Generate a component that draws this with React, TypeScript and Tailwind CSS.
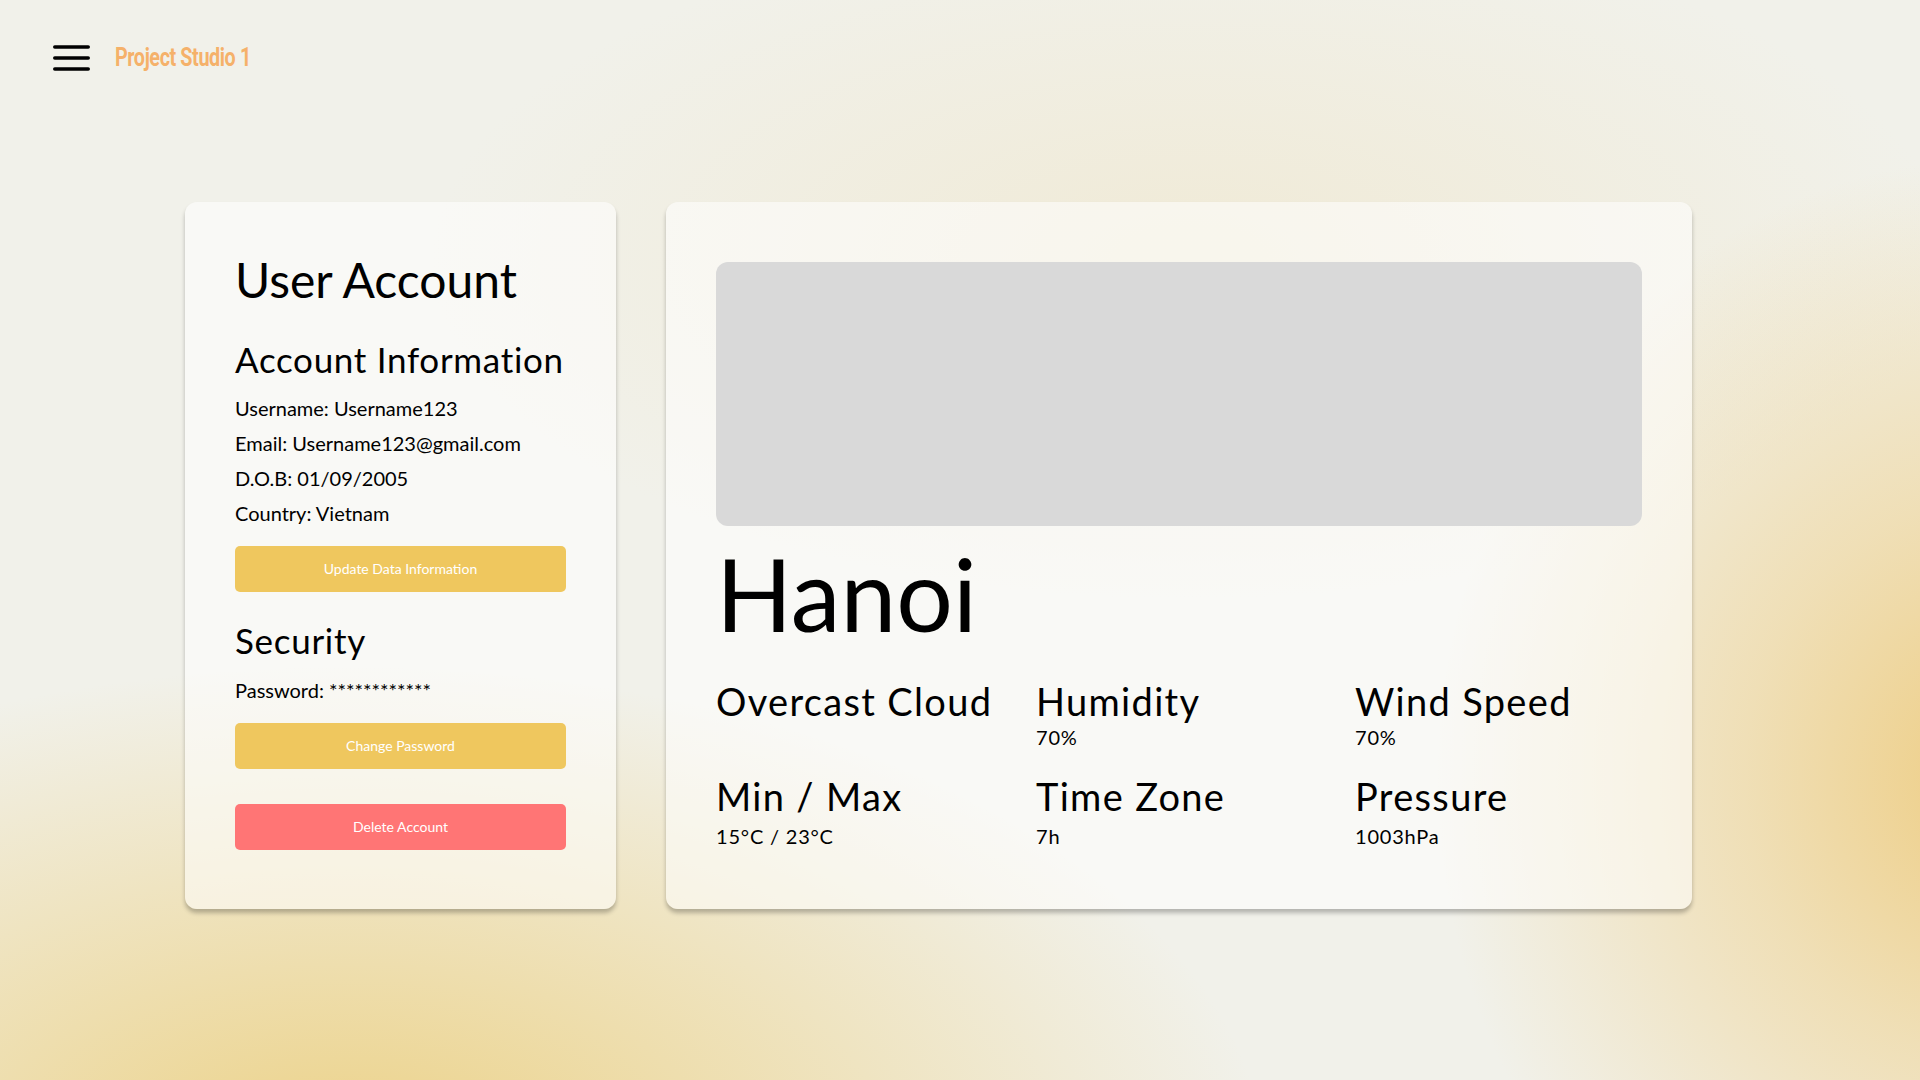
import React from 'react';

const stats = [
  { label: 'Overcast Cloud', value: '' },
  { label: 'Humidity', value: '70%' },
  { label: 'Wind Speed', value: '70%' },
  { label: 'Min / Max', value: '15°C / 23°C' },
  { label: 'Time Zone', value: '7h' },
  { label: 'Pressure', value: '1003hPa' },
];

const Menu: React.FC = () => (
  <svg width="38" height="30" viewBox="0 0 38 30" fill="none" stroke="#000" strokeWidth="3.5" strokeLinecap="round">
    <line x1="2.75" y1="4" x2="36.25" y2="4" />
    <line x1="2.75" y1="15" x2="36.25" y2="15" />
    <line x1="2.75" y1="26" x2="36.25" y2="26" />
  </svg>
);

const App: React.FC = () => {
  return (
    <div className="min-h-screen w-full bg-[#f1f1ea] bg-[image:radial-gradient(ellipse_920px_500px_at_18%_108%,#ecd185_0%,rgba(236,209,133,0.55)_45%,rgba(236,209,133,0)_100%),radial-gradient(ellipse_560px_620px_at_104%_72%,#eecd83_0%,rgba(238,205,131,0.5)_45%,rgba(238,205,131,0)_100%),radial-gradient(ellipse_760px_340px_at_62%_24%,#f0ead6_0%,rgba(240,234,214,0)_100%)] font-['Lato',sans-serif] text-black">
      <header className="flex items-center gap-[25px] pl-[52px] pt-[42px]">
        <Menu />
        <span className="mt-[1px] inline-block origin-left scale-x-[0.79] font-['Roboto',sans-serif] text-[25px] leading-[30px] font-bold tracking-[-0.5px] whitespace-nowrap text-[#f5b16a]">
          Project Studio 1
        </span>
      </header>

      <main className="ml-[185px] mt-[129px] flex gap-[50px]">
        <section className="flex w-[431px] flex-col rounded-xl bg-white/55 px-[50px] pt-[49px] pb-[59px] shadow-[0_4px_4px_rgba(0,0,0,0.25)]">
          <h1 className="text-[48px] leading-[1.2] whitespace-nowrap">User Account</h1>
          <h2 className="mt-[29px] text-[35px] leading-[1.2] tracking-[0.02em] whitespace-nowrap">Account Information</h2>
          <div className="mt-[11px] text-[20px] leading-[35px]">
            <p>Username: Username123</p>
            <p>Email: Username123@gmail.com</p>
            <p>D.O.B: 01/09/2005</p>
            <p>Country: Vietnam</p>
          </div>
          <button className="mt-[15px] h-[46px] w-full rounded-[5px] bg-[#efc75e] text-[14px] text-white">
            Update Data Information
          </button>
          <h2 className="mt-[27px] text-[35px] leading-[1.2] tracking-[0.02em]">Security</h2>
          <p className="mt-[12px] text-[20px] leading-[35px]">Password: ************</p>
          <button className="mt-[15px] h-[46px] w-full rounded-[5px] bg-[#efc75e] text-[14px] text-white">
            Change Password
          </button>
          <button className="mt-[35px] h-[46px] w-full rounded-[5px] bg-[#ff7575] text-[14px] text-white">
            Delete Account
          </button>
        </section>

        <section className="flex w-[1026px] flex-col rounded-xl bg-white/55 px-[50px] pt-[60px] shadow-[0_4px_4px_rgba(0,0,0,0.25)]">
          <div className="h-[264px] w-full rounded-xl bg-[#d9d9d9]" />
          <h1 className="mt-[7px] text-[100px] leading-[1.2]">Hanoi</h1>
          <div className="mt-[26px] grid grid-cols-[320px_319px_1fr]">
            {stats.slice(0, 3).map((s) => (
              <div key={s.label}>
                <h3 className="text-[38px] leading-[1.2] tracking-[0.035em] whitespace-nowrap">{s.label}</h3>
                {s.value && <p className="text-[20px] leading-[1.2] tracking-[0.04em]">{s.value}</p>}
              </div>
            ))}
            {stats.slice(3).map((s) => (
              <div key={s.label} className="mt-[25px]">
                <h3 className="text-[38px] leading-[1.2] tracking-[0.035em] whitespace-nowrap">{s.label}</h3>
                <p className="mt-[5px] text-[20px] leading-[1.2] tracking-[0.04em]">{s.value}</p>
              </div>
            ))}
          </div>
        </section>
      </main>
    </div>
  );
};

export default App;
